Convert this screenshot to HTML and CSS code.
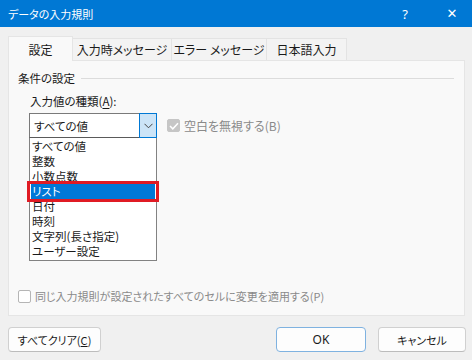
FILE: index.html
```html
<!DOCTYPE html>
<html lang="ja">
<head>
<meta charset="utf-8">
<link rel="stylesheet" href="styles.css">
</head>
<body>
<div class="dialog">
  <div class="titlebar">
    <span class="title">データの入力規則</span>
    <span class="tb-btns"><span class="help">?</span><span class="close">✕</span></span>
  </div>
  <div class="tabs">
    <div class="tab active">設定</div>
    <div class="tab">入力時メッセージ</div>
    <div class="tab">エラー メッセージ</div>
    <div class="tab">日本語入力</div>
  </div>
  <div class="panel">
    <div class="group-head"><span>条件の設定</span><span class="rule"></span></div>
    <div class="field-label">入力値の種類(<u>A</u>):</div>
    <div class="row">
      <div class="combo-wrap">
        <div class="combo">
          <span class="combo-val">すべての値</span>
          <span class="combo-btn"><svg width="9" height="6" viewBox="0 0 9 6"><path d="M0.5 0.8 L4.5 4.8 L8.5 0.8" fill="none" stroke="#444" stroke-width="1"/></svg></span>
        </div>
        <ul class="list">
          <li>すべての値</li>
          <li>整数</li>
          <li>小数点数</li>
          <li class="sel">リスト</li>
          <li>日付</li>
          <li>時刻</li>
          <li>文字列(長さ指定)</li>
          <li>ユーザー設定</li>
        </ul>
      </div>
      <label class="chk disabled"><span class="box checked"><svg width="10" height="8" viewBox="0 0 10 8"><path d="M1 4 L3.8 6.8 L9 1.2" fill="none" stroke="#fff" stroke-width="1.5"/></svg></span>空白を無視する(B)</label>
    </div>
    <label class="chk bottom disabled"><span class="box"></span>同じ入力規則が設定されたすべてのセルに変更を適用する(P)</label>
  </div>
  <div class="buttons">
    <button class="btn">すべてクリア(<u>C</u>)</button>
    <span class="spacer"></span>
    <button class="btn ok">OK</button>
    <button class="btn">キャンセル</button>
  </div>
</div>
</body>
</html>
```
FILE: styles.css
```css
* { box-sizing: border-box; }
html, body { margin: 0; padding: 0; }
body {
  width: 472px; height: 360px; overflow: hidden;
  background: #f0f0f0;
  font-family: "Noto Sans CJK JP", "Noto Sans", sans-serif;
  font-size: 11.5px;
  font-feature-settings: "palt";
  color: #1a1a1a;
}
.dialog { width: 472px; height: 360px; display: flex; flex-direction: column; }
.titlebar {
  height: 27px; background: #0078d4; color: #fff;
  display: flex; align-items: center; justify-content: space-between;
  padding-left: 8px;
}
.title { font-size: 11px; }
.tb-btns { display: flex; align-items: center; }
.help { width: 54px; text-align: center; font-family: "Noto Sans", sans-serif; font-size: 13px; }
.close { width: 40px; text-align: center; font-family: "DejaVu Sans", sans-serif; font-size: 13px; }
.tabs {
  display: flex; align-items: flex-end;
  margin-top: 9px; padding-left: 8px; height: 24px;
}
.tab {
  height: 22px; padding: 0;
  display: flex; align-items: center; justify-content: center;
  white-space: nowrap;
  background: #f3f3f3;
  border: 1px solid #e3e3e3; border-bottom: none;
  margin-right: -1px;
  font-size: 12px;
}
.tab.active {
  background: #f9f9f9; border-color: #e5e5e5;
  width: 65px; position: relative; z-index: 1;
  margin-bottom: -1px; height: 25px;
}
.tab:nth-child(2) { width: 100px; }
.tab:nth-child(3) { width: 96px; }
.tab:nth-child(4) { width: 81px; }
.panel {
  margin: 0 7px 0 8px; height: 256px;
  background: #f9f9f9; border: 1px solid #e5e5e5;
  padding: 8px 9px 0 9px;
  display: flex; flex-direction: column;
}
.group-head { display: flex; align-items: center; gap: 6px; height: 18px; }
.group-head .rule { flex: 1; height: 1px; background: #dcdcdc; margin-right: 1px; }
.field-label { margin: 5px 0 0 12px; height: 18px; line-height: 18px; }
.field-label u { text-decoration-thickness: 1px; text-underline-offset: 2px; }
.row { display: flex; align-items: flex-start; margin: 3px 0 0 11px; }
.combo-wrap { width: 128px; }
.combo {
  height: 25px; border: 1px solid #7a7a7a; border-bottom-color: #5a5a5a;
  background: #fff; display: flex; align-items: stretch;
}
.combo-val { flex: 1; padding-left: 4px; display: flex; align-items: center; }
.combo-btn {
  width: 18px; background: #cce4f7; border: 1px solid #0078d4; margin: -1px -1px -1px 0;
  display: flex; align-items: center; justify-content: center;
}
.list {
  list-style: none; margin: 0; padding: 1px 1px 3px 1px;
  border: 1px solid #828282; border-top: none; background: #fff;
  height: 123px;
}
.list li { height: 15px; line-height: 15px; padding-left: 1px; white-space: nowrap; font-size: 11.5px; overflow: hidden; }
.list li.sel { background: #0078d7; color: #fff; position: relative; overflow: visible; }
.list li.sel::after {
  content: ""; position: absolute; left: -4px; right: -4px; top: -3px; bottom: -3px;
  border: 3px solid #e01b24;
}
.chk { display: flex; align-items: center; gap: 4px; }
.chk.disabled { color: #8a8a8a; }
.row .chk { margin: 4px 0 0 10px; font-size: 12px; }
.box {
  width: 13px; height: 13px; border: 1px solid #b5b5b5; background: #fff; border-radius: 2px;
  display: flex; align-items: center; justify-content: center;
}
.box.checked { background: #c6c6c6; border-color: #c6c6c6; }
.chk.bottom { margin-top: auto; margin-bottom: 11px; margin-left: 0; font-size: 11px; }
.buttons {
  display: flex; padding: 11px 6px 0 8px; gap: 12px;
}
.spacer { flex: 1; }
.btn {
  height: 25px; border: 1px solid #d0d0d0; border-bottom-color: #bcbcbc; border-radius: 4px;
  background: #fdfdfd; font: inherit; font-size: 11px; color: #1a1a1a; padding: 0;
}
.btn:first-child { width: 93px; }
.btn.ok { width: 90px; border-color: #7fb2e0; font-family: "Noto Sans", sans-serif; font-size: 12px; }
.btn:last-child { width: 88px; }
```
